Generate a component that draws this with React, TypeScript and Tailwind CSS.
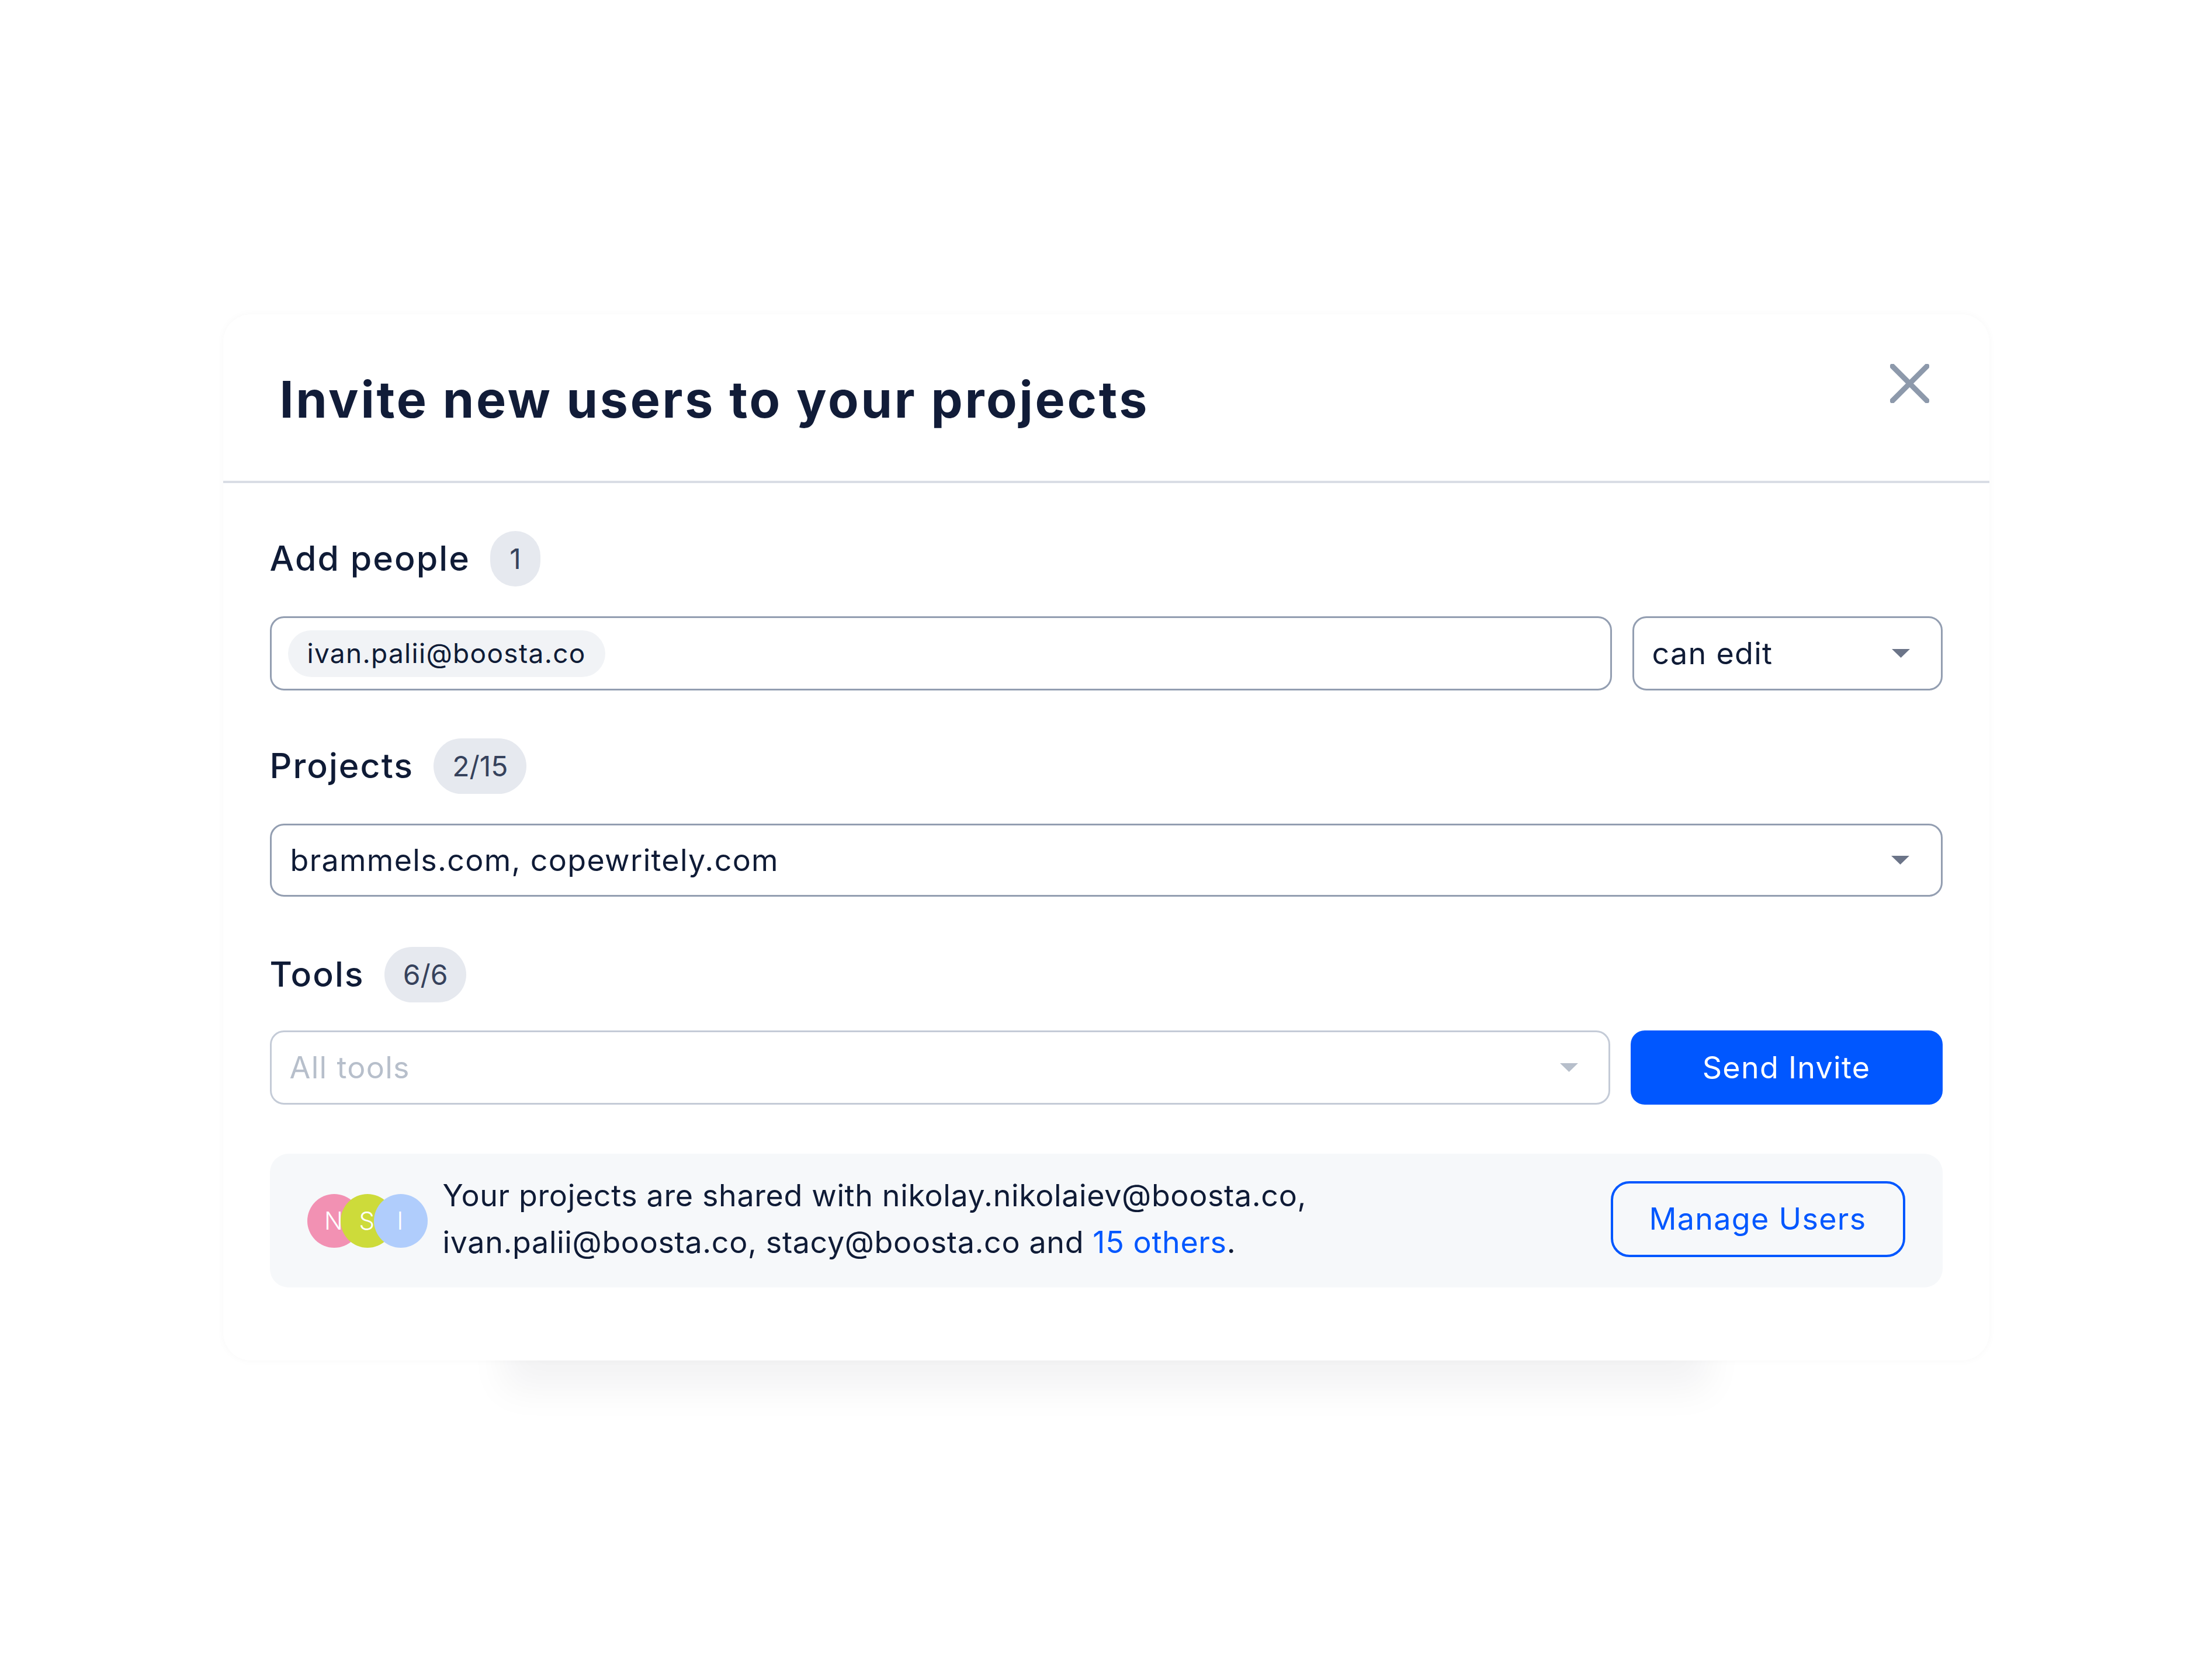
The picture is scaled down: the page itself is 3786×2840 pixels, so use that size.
import { useState } from "react";

function Caret({ className }: { className: string }) {
  return (
    <svg width="31" height="15" viewBox="0 0 31 15" className={className}>
      <path d="M0 0 L31 0 L15.5 15 Z" fill="currentColor" />
    </svg>
  );
}

function CountBadge({ value }: { value: string }) {
  return (
    <span className="flex h-[95px] min-w-[86px] items-center justify-center rounded-full bg-[#e6e9ef] px-[32px] text-[48px] tracking-normal text-[#36425c]">
      {value}
    </span>
  );
}

function SectionLabel({ label, count }: { label: string; count: string }) {
  return (
    <div className="flex h-[97px] items-center gap-[34px]">
      <h3 className="text-[59px] font-medium tracking-[0.035em] text-[#0f1b36]">{label}</h3>
      <CountBadge value={count} />
    </div>
  );
}

const avatars = [
  { letter: "N", color: "bg-[#f291b3]" },
  { letter: "S", color: "bg-[#cddb3a]" },
  { letter: "I", color: "bg-[#b0cdfc]" },
];

export default function App() {
  const [role] = useState("can edit");

  return (
    <div className="min-h-[2840px] bg-white pt-[538px] font-['Inter',sans-serif]">
      <div className="mx-auto w-[3023px] rounded-[48px] bg-white shadow-[0_0_14px_rgba(15,23,42,0.03),0_530px_60px_-480px_rgba(15,23,42,0.05)]">
        <div className="flex h-[285px] items-center justify-between pl-[97px] pr-[103px]">
          <h1 className="pt-[8px] text-[86px] font-bold tracking-[0.043em] text-[#111c38]">
            Invite new users to your projects
          </h1>
          <button aria-label="Close" className="-mt-[48px] text-[#8d99ab]">
            <svg width="67" height="67" viewBox="0 0 67 67">
              <path d="M4 4 L63 63 M63 4 L4 63" stroke="currentColor" strokeWidth="9" strokeLinecap="round" />
            </svg>
          </button>
        </div>
        <div className="h-[4px] bg-[#d9dde5]" />

        <div className="px-[80px] pt-[81px] pb-[125px] text-[52px] tracking-[0.025em] text-[#0f1b36]">
          <SectionLabel label="Add people" count="1" />
          <div className="mt-[50px] flex h-[127px] gap-[35px]">
            <div className="flex flex-1 items-center rounded-[24px] border-[3px] border-[#939eb1] px-[28px]">
              <span className="flex h-[80px] items-center rounded-full bg-[#f1f3f6] px-[33px] text-[46px]">
                ivan.palii@boosta.co
              </span>
            </div>
            <div className="flex w-[531px] items-center justify-between rounded-[24px] border-[3px] border-[#939eb1] pl-[31px] pr-[53px]">
              <span>{role}</span>
              <Caret className="text-[#6b7488]" />
            </div>
          </div>

          <div className="mt-[81px]">
            <SectionLabel label="Projects" count="2/15" />
          </div>
          <div className="mt-[50px] flex h-[125px] items-center justify-between rounded-[24px] border-[3px] border-[#939eb1] pl-[32px] pr-[54px]">
            <span>brammels.com, copewritely.com</span>
            <Caret className="text-[#6b7488]" />
          </div>

          <div className="mt-[85px]">
            <SectionLabel label="Tools" count="6/6" />
          </div>
          <div className="mt-[47px] flex h-[127px] gap-[35px]">
            <div className="flex flex-1 items-center justify-between rounded-[24px] border-[3px] border-[#c4cbd7] pl-[31px] pr-[52px]">
              <span className="text-[#b7bfcb]">All tools</span>
              <Caret className="text-[#b7bfcb]" />
            </div>
            <button className="w-[534px] rounded-[24px] bg-[#0057ff] text-white">Send Invite</button>
          </div>

          <div className="mt-[84px] flex h-[229px] items-center rounded-[32px] bg-[#f6f8fa] pl-[64px] pr-[64px]">
            <div className="flex">
              {avatars.map((a, i) => (
                <span
                  key={a.letter}
                  className={`flex h-[92px] w-[92px] items-center justify-center rounded-full ${a.color} text-[42px] font-light text-white ${i > 0 ? "-ml-[35px]" : ""}`}
                >
                  {a.letter}
                </span>
              ))}
            </div>
            <p className="ml-[26px] -mt-[6px] leading-[80px] tracking-[0.012em]">
              Your projects are shared with nikolay.nikolaiev@boosta.co,
              <br />
              ivan.palii@boosta.co, stacy@boosta.co and <span className="text-[#0057ff]">15 others</span>.
            </p>
            <button className="ml-auto -mt-[6px] h-[130px] w-[504px] rounded-[32px] border-[4px] border-[#0057ff] text-[#0057ff]">
              Manage Users
            </button>
          </div>
        </div>
      </div>
    </div>
  );
}
